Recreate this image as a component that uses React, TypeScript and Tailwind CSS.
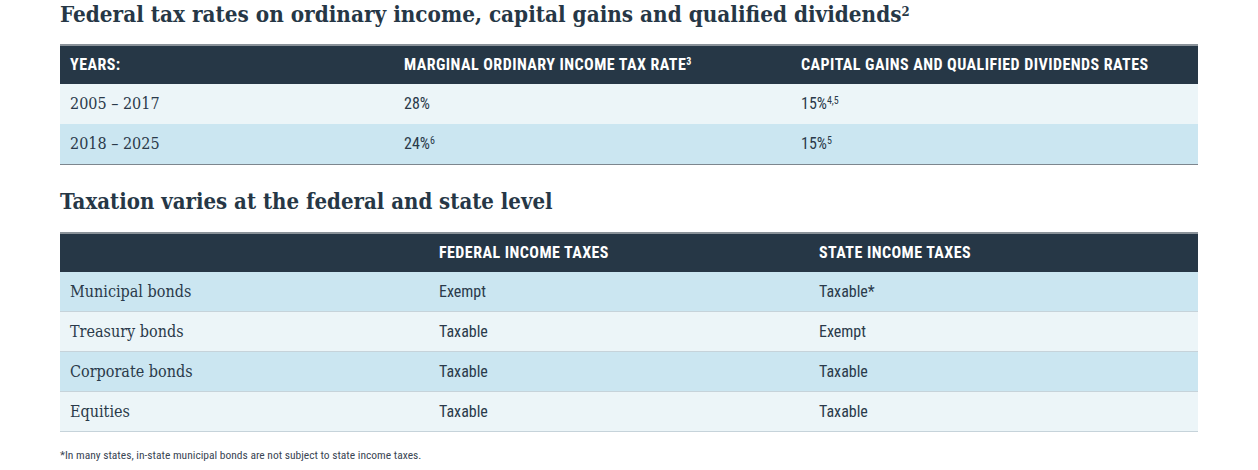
const serif = "font-['DejaVu_Serif_Condensed','DejaVu_Serif','Liberation_Serif',serif]";
const narrow = "font-['Roboto_Condensed','Roboto','Liberation_Sans',sans-serif]";

const rates = [
  { years: "2005 – 2017", ordinary: "28%", ordSup: "", gains: "15%", gainSup: "4,5", bg: "bg-[#ecf5f8]" },
  { years: "2018 – 2025", ordinary: "24%", ordSup: "6", gains: "15%", gainSup: "5", bg: "bg-[#cbe6f1]" },
];

const taxation = [
  { name: "Municipal bonds", federal: "Exempt", state: "Taxable*", bg: "bg-[#cbe6f1]" },
  { name: "Treasury bonds", federal: "Taxable", state: "Exempt", bg: "bg-[#ecf5f8]" },
  { name: "Corporate bonds", federal: "Taxable", state: "Taxable", bg: "bg-[#cbe6f1]" },
  { name: "Equities", federal: "Taxable", state: "Taxable", bg: "bg-[#ecf5f8]" },
];

export default function App() {
  return (
    <div className="w-[1258px] h-[470px] bg-white px-[60px] text-[#2a3a4a] overflow-hidden">
      <h2 className={`${serif} font-bold text-[22.3px] leading-[28px] text-[#263746]`}>
        Federal tax rates on ordinary income, capital gains and qualified dividends<sup className="text-[13px]">2</sup>
      </h2>

      <div className="mt-[16px] border-b border-[#7d868e]">
        <div className={`${narrow} grid grid-cols-[334px_397px_1fr] h-[40px] items-center bg-[#263746] border-t-2 border-[#8a9299] text-white font-bold text-[16px] tracking-[0.45px]`}>
          <div className="pl-[10px]">YEARS:</div>
          <div className="pl-[10px]">MARGINAL ORDINARY INCOME TAX RATE<sup className="text-[10px]">3</sup></div>
          <div className="pl-[10px]">CAPITAL GAINS AND QUALIFIED DIVIDENDS RATES</div>
        </div>
        {rates.map((r) => (
          <div key={r.years} className={`grid grid-cols-[334px_397px_1fr] h-[40px] items-center ${r.bg} text-[16px]`}>
            <div className={`${serif} pl-[10px]`}>{r.years}</div>
            <div className={`${narrow} pl-[10px]`}>
              {r.ordinary}
              {r.ordSup && <sup className="text-[10px]">{r.ordSup}</sup>}
            </div>
            <div className={`${narrow} pl-[10px]`}>
              {r.gains}
              <sup className="text-[10px]">{r.gainSup}</sup>
            </div>
          </div>
        ))}
      </div>

      <h2 className={`${serif} font-bold text-[22px] leading-[28px] text-[#263746] mt-[22px]`}>
        Taxation varies at the federal and state level
      </h2>

      <div className="mt-[17px]">
        <div className={`${narrow} grid grid-cols-[369px_380px_1fr] h-[40px] items-center bg-[#263746] border-t-2 border-[#8a9299] text-white font-bold text-[16px] tracking-[0.45px]`}>
          <div className="pl-[10px]"></div>
          <div className="pl-[10px]">FEDERAL INCOME TAXES</div>
          <div className="pl-[10px]">STATE INCOME TAXES</div>
        </div>
        {taxation.map((r) => (
          <div key={r.name} className={`grid grid-cols-[369px_380px_1fr] h-[40px] items-center ${r.bg} border-b border-[#c6d3da] text-[16px]`}>
            <div className={`${serif} pl-[10px]`}>{r.name}</div>
            <div className={`${narrow} pl-[10px]`}>{r.federal}</div>
            <div className={`${narrow} pl-[10px]`}>{r.state}</div>
          </div>
        ))}
      </div>

      <p className={`${narrow} text-[11.5px] text-[#3a4654] mt-[15px]`}>
        *In many states, in-state municipal bonds are not subject to state income taxes.
      </p>
    </div>
  );
}
